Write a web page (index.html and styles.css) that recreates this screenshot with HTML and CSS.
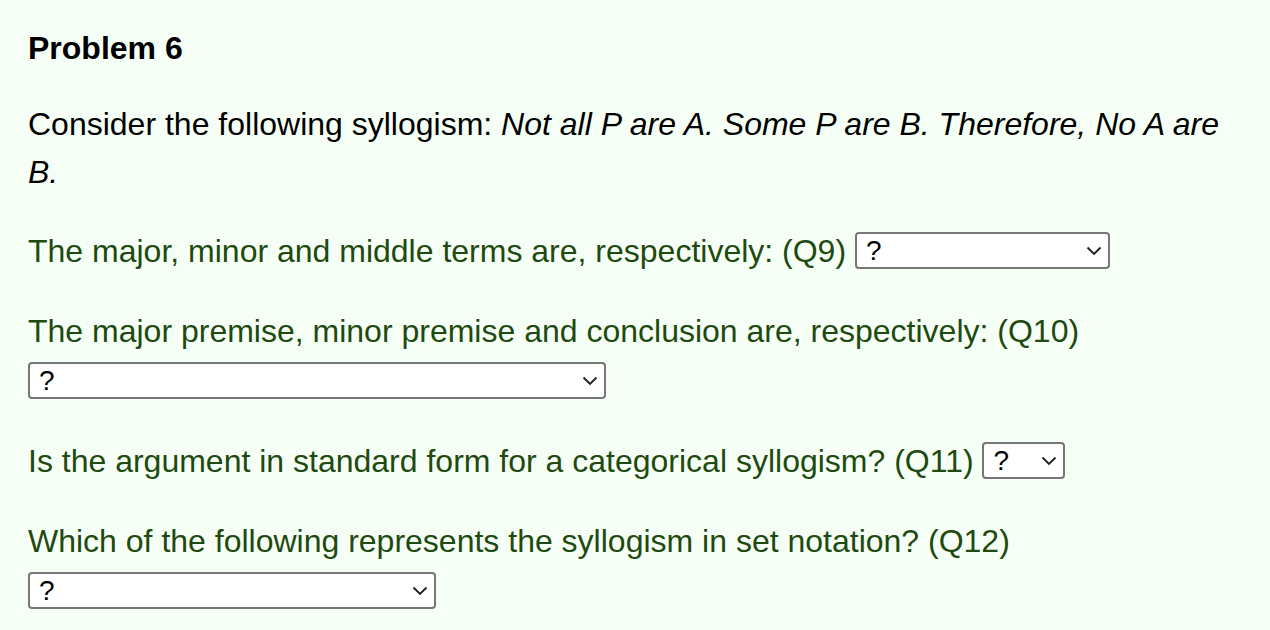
FILE: index.html
```html
<!DOCTYPE html>
<html lang="en">
<head>
<meta charset="utf-8">
<title>Problem 6</title>
<link rel="stylesheet" href="styles.css">
</head>
<body>
<main class="page">
  <h2 class="title">Problem 6</h2>
  <p class="intro">Consider the following syllogism: <em>Not all P are A. Some P are B. Therefore, No A are B.</em></p>

  <p class="q">The major, minor and middle terms are, respectively: (Q9) <span class="sel w9"><select><option>?</option></select><svg class="chev" viewBox="0 0 16 10" width="16" height="10"><path d="M1.5 1.5 L8 8 L14.5 1.5" fill="none" stroke="#222" stroke-width="1.9"/></svg></span></p>

  <p class="q">The major premise, minor premise and conclusion are, respectively: (Q10)<br><span class="sel w10"><select><option>?</option></select><svg class="chev" viewBox="0 0 16 10" width="16" height="10"><path d="M1.5 1.5 L8 8 L14.5 1.5" fill="none" stroke="#222" stroke-width="1.9"/></svg></span></p>

  <p class="q">Is the argument in standard form for a categorical syllogism? (Q11) <span class="sel w11"><select><option>?</option></select><svg class="chev" viewBox="0 0 16 10" width="16" height="10"><path d="M1.5 1.5 L8 8 L14.5 1.5" fill="none" stroke="#222" stroke-width="1.9"/></svg></span></p>

  <p class="q">Which of the following represents the syllogism in set notation? (Q12)<br><span class="sel w12"><select><option>?</option></select><svg class="chev" viewBox="0 0 16 10" width="16" height="10"><path d="M1.5 1.5 L8 8 L14.5 1.5" fill="none" stroke="#222" stroke-width="1.9"/></svg></span></p>
</main>
</body>
</html>
```
FILE: styles.css
```css
html, body {
  margin: 0;
  padding: 0;
  background: #f6fff6;
}
.page {
  padding: 28px 28px 0 28px;
  font-family: "Liberation Sans", Arial, Helvetica, sans-serif;
  font-size: 32px;
  color: #000;
}
.title {
  margin: 0;
  font-size: 32px;
  font-weight: bold;
  line-height: 40px;
}
.intro {
  margin: 32px 0 0 0;
  line-height: 48px;
}
.q {
  margin: 30px 0 0 0;
  line-height: 50px;
  color: #1e4a10;
}
.sel {
  position: relative;
  display: inline-block;
  vertical-align: middle;
  height: 37px;
  margin-bottom: 6px;
}
.sel select {
  appearance: none;
  -webkit-appearance: none;
  box-sizing: border-box;
  width: 100%;
  height: 37px;
  margin: 0;
  padding: 0 0 0 9px;
  border: 2px solid #777;
  border-radius: 4px;
  background: #fff;
  font-family: "Liberation Sans", Arial, Helvetica, sans-serif;
  font-size: 28px;
  color: #000;
  vertical-align: top;
}
.chev {
  position: absolute;
  right: 8px;
  top: 14px;
  pointer-events: none;
}
.w9 { width: 255px; }
.w10 { width: 578px; }
.w11 { width: 83px; }
.w12 { width: 408px; }
```
